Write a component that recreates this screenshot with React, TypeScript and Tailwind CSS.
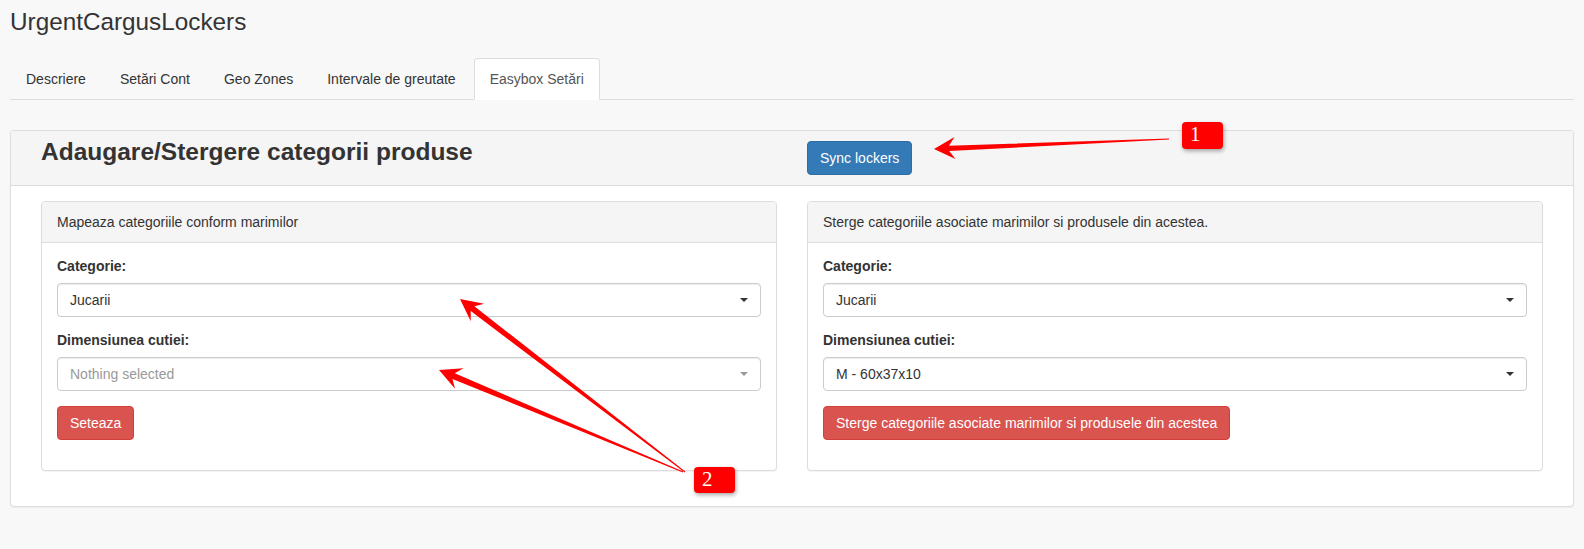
import React from 'react';

const TABS = ['Descriere', 'Setări Cont', 'Geo Zones', 'Intervale de greutate', 'Easybox Setări'];

type Pt = [number, number];

// tapered "skitch" style arrow, from tail to tip
function arrowPoints(tail: Pt, tip: Pt, headLen = 22, headHalf = 11, tailHalf = 0.6, neckHalf = 3) {
  const dx = tip[0] - tail[0];
  const dy = tip[1] - tail[1];
  const len = Math.hypot(dx, dy);
  const d: Pt = [dx / len, dy / len];
  const n: Pt = [-d[1], d[0]];
  const base: Pt = [tip[0] - d[0] * headLen, tip[1] - d[1] * headLen];
  const neck: Pt = [tip[0] - d[0] * headLen * 0.72, tip[1] - d[1] * headLen * 0.72];
  const p = (o: Pt, k: number): string => `${o[0] + n[0] * k},${o[1] + n[1] * k}`;
  return [
    p(tail, tailHalf),
    p(neck, neckHalf),
    p(base, headHalf),
    `${tip[0]},${tip[1]}`,
    p(base, -headHalf),
    p(neck, -neckHalf),
    p(tail, -tailHalf),
  ].join(' ');
}

function Caret({ muted }: { muted?: boolean }) {
  return (
    <span
      className={`h-0 w-0 border-x-[4px] border-t-[4px] border-x-transparent ${muted ? 'border-t-[#999]' : 'border-t-[#333]'}`}
    />
  );
}

function Select({ value, placeholder }: { value?: string; placeholder?: string }) {
  return (
    <div className="flex h-[34px] items-center justify-between rounded-[4px] border border-[#ccc] bg-white pl-[12px] pr-[12px] shadow-[inset_0_1px_1px_rgba(0,0,0,0.075)]">
      {value ? <span className="text-[#333]">{value}</span> : <span className="text-[#999]">{placeholder}</span>}
      <Caret muted={!value} />
    </div>
  );
}

function FormPanel({
  title,
  size,
  button,
}: {
  title: string;
  size?: string;
  button: string;
}) {
  return (
    <div className="mb-[20px] rounded-[4px] border border-[#ddd] bg-white shadow-[0_1px_1px_rgba(0,0,0,0.05)]">
      <div className="rounded-t-[3px] border-b border-[#ddd] bg-[#f5f5f5] px-[15px] py-[10px] leading-5">{title}</div>
      <div className="p-[15px]">
        <div className="mb-[15px]">
          <label className="mb-[9px] block font-bold leading-4">Categorie:</label>
          <Select value="Jucarii" />
        </div>
        <div className="mb-[15px]">
          <label className="mb-[9px] block font-bold leading-4">Dimensiunea cutiei:</label>
          <Select value={size} placeholder="Nothing selected" />
        </div>
        <div className="mb-[15px]">
          <button className="rounded-[4px] border border-[#d43f3a] bg-[#d9534f] px-[12px] py-[6px] leading-5 text-white">
            {button}
          </button>
        </div>
      </div>
    </div>
  );
}

export default function App() {
  return (
    <div className="relative min-h-screen bg-[#f8f8f8] px-[10px] font-['Liberation_Sans',Arial,sans-serif] text-[14px] text-[#333]">
      <h1 className="pt-[9px] text-[24.3px] leading-[26px] text-[#333]">UrgentCargusLockers</h1>

      {/* tabs */}
      <ul className="mt-[23px] flex border-b border-[#ddd]">
        {TABS.map((t, i) => {
          const active = i === TABS.length - 1;
          return (
            <li key={t} className="-mb-px mr-[2px]">
              <span
                className={`block rounded-t-[4px] border px-[15px] py-[10px] leading-5 ${
                  active ? 'border-[#ddd] border-b-transparent bg-white text-[#555]' : 'border-transparent text-[#333]'
                }`}
              >
                {t}
              </span>
            </li>
          );
        })}
      </ul>

      {/* main panel */}
      <div className="mb-[20px] mt-[30px] rounded-[4px] border border-[#ddd] bg-white shadow-[0_1px_1px_rgba(0,0,0,0.05)]">
        <div className="flex rounded-t-[3px] border-b border-[#ddd] bg-[#f5f5f5] px-[15px] py-[10px]">
          <div className="w-1/2 px-[15px]">
            <h3 className="-mt-[2px] text-[24.5px] font-bold leading-[26px] text-[#333]">Adaugare/Stergere categorii produse</h3>
          </div>
          <div className="w-1/2 px-[15px]">
            <button className="rounded-[4px] border border-[#2e6da4] bg-[#337ab7] px-[12px] py-[6px] leading-5 text-white">
              Sync lockers
            </button>
          </div>
        </div>
        <div className="flex p-[15px]">
          <div className="w-1/2 px-[15px]">
            <FormPanel title="Mapeaza categoriile conform marimilor" button="Seteaza" />
          </div>
          <div className="w-1/2 px-[15px]">
            <FormPanel
              title="Sterge categoriile asociate marimilor si produsele din acestea."
              size="M - 60x37x10"
              button="Sterge categoriile asociate marimilor si produsele din acestea"
            />
          </div>
        </div>
      </div>

      {/* annotations */}
      <svg className="pointer-events-none absolute left-0 top-0" width="1584" height="549" viewBox="0 0 1584 549">
        <polygon points={arrowPoints([1169, 139], [934, 149], 21, 11, 0.6, 2.6)} fill="#ff0000" />
        <polygon points={arrowPoints([685, 472], [460, 299], 22, 11, 0.5, 3)} fill="#ff0000" />
        <polygon points={arrowPoints([683, 472], [439, 370], 22, 11, 0.5, 3)} fill="#ff0000" />
      </svg>
      <div className="absolute left-[1182px] top-[122px] h-[27px] w-[41px] rounded-[4px] bg-[#ff0000] pl-[8px] font-['Liberation_Serif',serif] text-[21px] leading-[24px] text-white shadow-[1px_2px_4px_rgba(0,0,0,0.35)]">
        1
      </div>
      <div className="absolute left-[694px] top-[467px] h-[26px] w-[41px] rounded-[4px] bg-[#ff0000] pl-[8px] font-['Liberation_Serif',serif] text-[21px] leading-[24px] text-white shadow-[1px_2px_4px_rgba(0,0,0,0.35)]">
        2
      </div>
    </div>
  );
}
